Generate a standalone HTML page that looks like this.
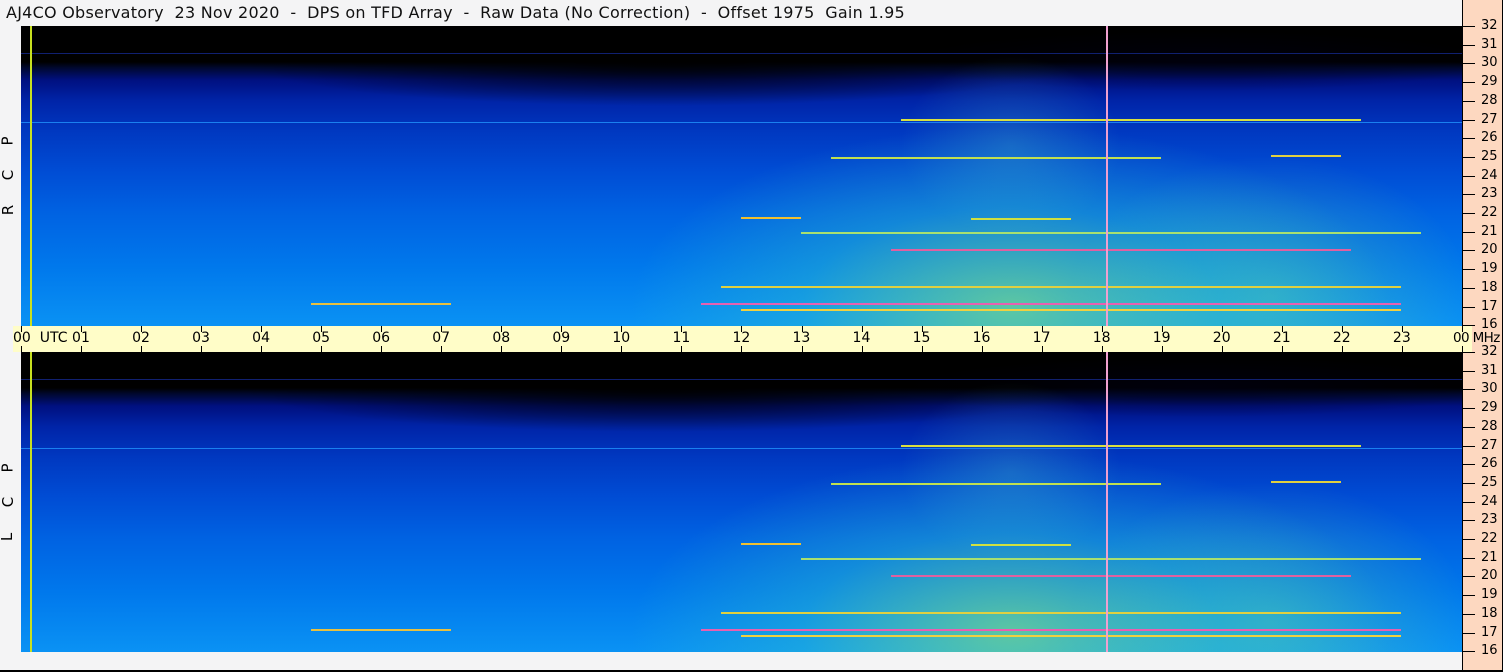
<!DOCTYPE html>
<html><head><style>
body{margin:0;width:1503px;height:672px;overflow:hidden;background:#f4f4f5;font-family:"DejaVu Sans","Liberation Sans",sans-serif;position:relative}
.frame{position:absolute;left:0;top:0;width:1501px;height:670px;border-right:2px solid #000;border-bottom:2px solid #000;box-sizing:content-box}
.title{position:absolute;left:6px;top:3px;font-size:16px;color:#111;white-space:pre;letter-spacing:0.25px}
.panel{position:absolute;left:21px;width:1441px;height:300px;overflow:hidden;
background:linear-gradient(to bottom,#000 0%,#000 12%,#000830 14%,#001080 18%,#0024a8 25%,#0038c0 35%,#004cd4 48%,#0062e2 62%,#0078ec 80%,#0a92f4 100%)}
.dark{position:absolute;left:0;top:0;width:1441px;height:300px;background:radial-gradient(ellipse 420px 45px at 640px 35px,rgba(0,0,0,0.95),rgba(0,0,0,0) 100%),radial-gradient(ellipse 300px 30px at 1180px 35px,rgba(0,0,20,0.6),rgba(0,0,0,0) 100%)}
.glow{position:absolute;left:0;top:0;width:1441px;height:300px;background:radial-gradient(ellipse 380px 180px at 990px 280px,rgba(150,240,110,0.6),rgba(60,210,190,0.3) 55%,rgba(0,0,0,0) 100%),radial-gradient(ellipse 200px 140px at 1250px 270px,rgba(120,230,140,0.35),rgba(0,0,0,0) 100%),radial-gradient(ellipse 110px 90px at 990px 120px,rgba(80,200,200,0.25),rgba(0,0,0,0) 100%)}
.ln{position:absolute;height:2px}
.vl{position:absolute;top:0;height:300px;width:2px}
.xbar{position:absolute;left:13px;top:326px;width:1459px;height:26px;background:#fffdc8}
.xl{position:absolute;top:330px;font-size:14px;color:#000;white-space:nowrap}
.tk{position:absolute;width:1px;height:6px;background:#000}
.raxis{position:absolute;left:1462px;top:0;width:39px;height:670px;background:#fdd8c0;border-left:1px solid #000}
.rl{position:absolute;left:1481px;font-size:13px;color:#000}
.rt{position:absolute;left:1462px;width:13px;height:1px;background:#000}
.side{position:absolute;left:3px;font-size:15px;color:#000;transform:rotate(-90deg)}
</style></head><body>
<div class="frame"></div>
<div class="title">AJ4CO Observatory  23 Nov 2020  -  DPS on TFD Array  -  Raw Data (No Correction)  -  Offset 1975  Gain 1.95</div>
<div class="raxis"></div>

<div class="panel" style="top:26px">
 <div class="dark"></div><div class="glow"></div>
 <div class="ln" style="left:0;width:1441px;top:96px;height:1px;background:#1a80f0"></div>
 <div class="ln" style="left:0;width:1441px;top:27px;height:1px;background:#102070"></div>
 <div class="ln" style="left:880px;width:460px;top:93px;background:#d8e040"></div>
 <div class="ln" style="left:810px;width:330px;top:131px;background:#c0e050"></div>
 <div class="ln" style="left:1250px;width:70px;top:129px;background:#e0d040"></div>
 <div class="ln" style="left:720px;width:60px;top:191px;background:#f0c030"></div>
 <div class="ln" style="left:950px;width:100px;top:192px;background:#d0e040"></div>
 <div class="ln" style="left:780px;width:620px;top:206px;background:#a8e070"></div>
 <div class="ln" style="left:870px;width:460px;top:223px;background:#e060a0"></div>
 <div class="ln" style="left:700px;width:680px;top:260px;background:#e0d040"></div>
 <div class="ln" style="left:680px;width:700px;top:277px;background:#e860b0"></div>
 <div class="ln" style="left:290px;width:140px;top:277px;background:#e8c040"></div>
 <div class="ln" style="left:720px;width:660px;top:283px;background:#f0d040"></div>
 <div class="vl" style="left:9px;background:#c8e020"></div>
 <div class="vl" style="left:1085px;background:#f0a0d0"></div>
</div>

<div class="panel" style="top:352px">
 <div class="dark"></div><div class="glow"></div>
 <div class="ln" style="left:0;width:1441px;top:96px;height:1px;background:#1a80f0"></div>
 <div class="ln" style="left:0;width:1441px;top:27px;height:1px;background:#102070"></div>
 <div class="ln" style="left:880px;width:460px;top:93px;background:#d8e040"></div>
 <div class="ln" style="left:810px;width:330px;top:131px;background:#c0e050"></div>
 <div class="ln" style="left:1250px;width:70px;top:129px;background:#e0d040"></div>
 <div class="ln" style="left:720px;width:60px;top:191px;background:#f0c030"></div>
 <div class="ln" style="left:950px;width:100px;top:192px;background:#d0e040"></div>
 <div class="ln" style="left:780px;width:620px;top:206px;background:#a8e070"></div>
 <div class="ln" style="left:870px;width:460px;top:223px;background:#e060a0"></div>
 <div class="ln" style="left:700px;width:680px;top:260px;background:#e0d040"></div>
 <div class="ln" style="left:680px;width:700px;top:277px;background:#e860b0"></div>
 <div class="ln" style="left:290px;width:140px;top:277px;background:#e8c040"></div>
 <div class="ln" style="left:720px;width:660px;top:283px;background:#f0d040"></div>
 <div class="vl" style="left:9px;background:#c8e020"></div>
 <div class="vl" style="left:1085px;background:#f0a0d0"></div>
</div>

<div class="xbar"></div>
<div id="ax"></div>
<div class="side" style="top:132px">P</div>
<div class="side" style="top:166px">C</div>
<div class="side" style="top:201px">R</div>
<div class="side" style="top:459px">P</div>
<div class="side" style="top:493px">C</div>
<div class="side" style="top:528px">L</div>
<script>
var h='';
for(var i=0;i<=24;i++){var x=21+i*60.04;var t=(i%24<10?'0':'')+(i%24);
if(i==0)t='00&nbsp; UTC';if(i==24)t='00 MHz';
var lx=(i==0)?13:x-9;
var st=(i==24)?'letter-spacing:-0.6px;font-size:13.5px;':'';
h+='<div class="xl" style="'+st+'left:'+lx+'px">'+t+'</div>';
h+='<div class="tk" style="left:'+Math.round(x)+'px;top:326px"></div><div class="tk" style="left:'+Math.round(x)+'px;top:346px"></div>';}
for(var p=0;p<2;p++){var y0=p?352:26;
for(var f=32;f>=16;f--){var y=y0+(32-f)*18.7;
h+='<div class="rt" style="top:'+Math.round(y)+'px"></div><div class="rl" style="top:'+Math.round(y-8)+'px">'+f+'</div>';}}
document.getElementById('ax').innerHTML=h;
</script>
</body></html>
